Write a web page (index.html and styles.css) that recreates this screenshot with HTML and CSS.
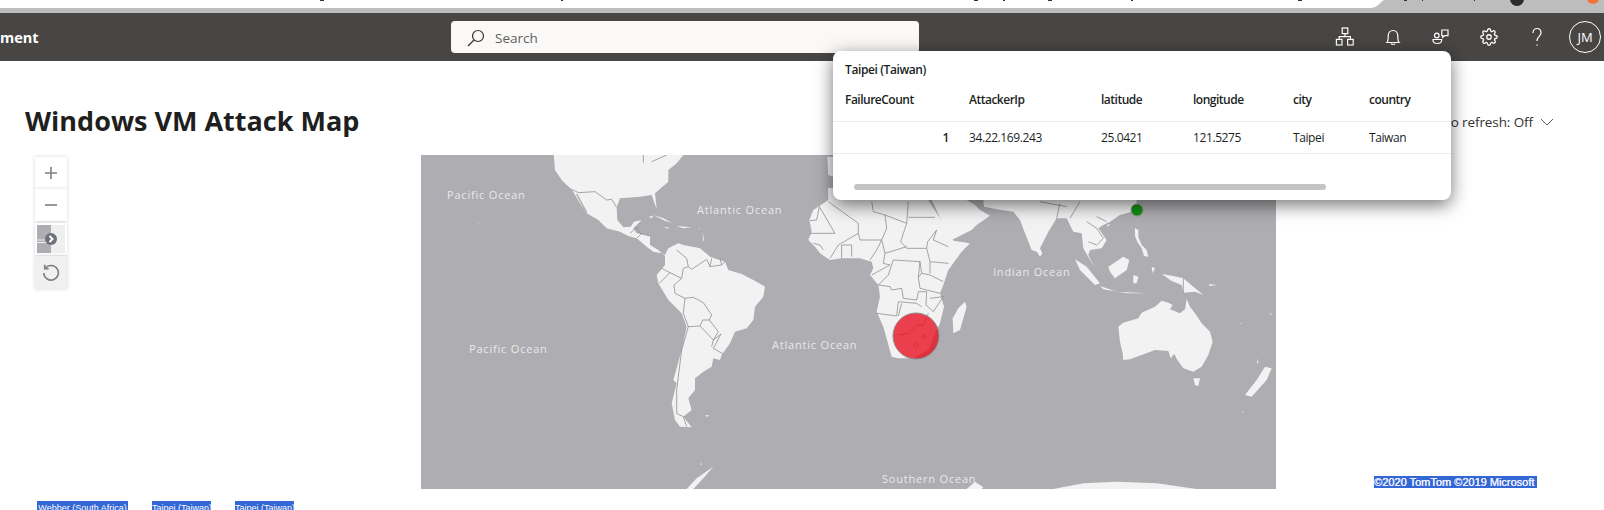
FILE: index.html
```html
<!DOCTYPE html>
<html lang="en">
<head>
    <meta charset="UTF-8">
    <meta name="viewport" content="width=device-width, initial-scale=1.0">
    <title>Windows VM Attack Map</title>
    <link rel="stylesheet" href="styles.css">
</head>
<body>
    <!-- bottom edge of the browser chrome -->
    <svg class="chrome-strip" width="1604" height="13" viewBox="0 0 1604 13">
        <rect width="1604" height="13" fill="#bdbdbd"/>
        <path d="M0 0H1384C1380 2 1378 8 1370 8H0Z" fill="#fff"/>
        <path d="M320 0h4v1h-4zM561 0h2v1h-2zM974 0h4v1h-4zM1003 0h2v1h-2zM1048 0h4v1h-4zM1131 0h2v1h-2zM1298 0h4v1h-4zM1404 0h3v1h-3zM1422 0h1v1h-1zM1474 0h1v1h-1z" fill="#333"/>
        <circle cx="1517" cy="-1" r="7" fill="#2d2a28"/>
        <circle cx="1593" cy="-2" r="6" fill="#f4733a"/>
    </svg>

    <header class="topbar">
        <div class="brand">ment</div>
        <div class="search">
            <svg class="search-icon" width="20" height="20" viewBox="0 0 20 20">
                <circle cx="12" cy="8" r="5.5"/>
                <path d="M8 12L2 18"/>
            </svg>
            <span>Search</span>
        </div>
        <div class="top-icons">
            <div class="top-icon">
                <svg width="24" height="24" viewBox="0 0 24 24">
                    <rect x="9.2" y="3" width="5.6" height="5.6"/>
                    <rect x="3.4" y="14.4" width="5.6" height="5.6"/>
                    <rect x="14.6" y="14.4" width="5.6" height="5.6"/>
                    <path d="M12 8.6v3M6.2 14.4v-2.8h11.2v2.8"/>
                </svg>
            </div>
            <div class="top-icon">
                <svg width="24" height="24" viewBox="0 0 24 24">
                    <path d="M6 17.5c1.2-1 1.2-3 1.2-6.5 0-3.400 2.200-5.500 4.800-5.500s4.800 2.100 4.800 5.500c0 3.500 0 5.500 1.200 6.500z"/>
                    <path d="M10 18.500c.5 1.300 3.500 1.300 4 0"/>
                </svg>
            </div>
            <div class="top-icon">
                <svg width="24" height="24" viewBox="0 0 24 24">
                    <path d="M12.800 5h6.200v5.600h-3.300l-2 1.800v-1.800h-.9z"/>
                    <circle cx="7.800" cy="10.500" r="2.300"/>
                    <path d="M4 14.500h8.600v.8c0 1.900-1.900 3.200-4.300 3.200s-4.300-1.300-4.300-3.200z"/>
                </svg>
            </div>
            <div class="top-icon top-icon-gear">
                <svg width="18" height="18" viewBox="0 0 24 24">
                    <circle cx="12" cy="12" r="3"/>
                    <path d="M19.4 15a1.65 1.65 0 0 0 .33 1.82l.06.06a2 2 0 0 1 0 2.83 2 2 0 0 1-2.83 0l-.06-.06a1.65 1.65 0 0 0-1.82-.33 1.65 1.65 0 0 0-1 1.51V21a2 2 0 0 1-2 2 2 2 0 0 1-2-2v-.09A1.65 1.65 0 0 0 9 19.4a1.65 1.65 0 0 0-1.82.33l-.06.06a2 2 0 0 1-2.83 0 2 2 0 0 1 0-2.83l.06-.06a1.65 1.65 0 0 0 .33-1.82 1.65 1.65 0 0 0-1.51-1H3a2 2 0 0 1-2-2 2 2 0 0 1 2-2h.09A1.65 1.65 0 0 0 4.600 9a1.65 1.65 0 0 0-.33-1.82l-.06-.06a2 2 0 0 1 0-2.83 2 2 0 0 1 2.83 0l.06.06a1.65 1.65 0 0 0 1.82.33H9a1.65 1.65 0 0 0 1-1.51V3a2 2 0 0 1 2-2 2 2 0 0 1 2 2v.09a1.65 1.65 0 0 0 1 1.51 1.65 1.65 0 0 0 1.82-.33l.06-.06a2 2 0 0 1 2.83 0 2 2 0 0 1 0 2.83l-.06.06a1.65 1.65 0 0 0-.33 1.82V9a1.65 1.65 0 0 0 1.51 1H21a2 2 0 0 1 2 2 2 2 0 0 1-2 2h-.09a1.65 1.65 0 0 0-1.51 1z"/>
                </svg>
            </div>
            <div class="top-icon">
                <svg width="24" height="24" viewBox="0 0 24 24">
                    <path d="M8 8c0-3 1.800-4.500 4-4.500s4 1.500 4 4.300c0 3.500-4 3.700-4 8.200"/>
                    <path d="M12 19.500v1.200"/>
                </svg>
            </div>
            <div class="avatar-cell">
                <div class="avatar">JM</div>
            </div>
        </div>
    </header>

    <main class="page">
        <div class="title-row">
            <h1>Windows VM Attack Map</h1>
            <div class="refresh">
                <span>Auto refresh: Off</span>
                <svg width="14" height="14" viewBox="0 0 14 14">
                    <path d="M1 4l6 6 6-6"/>
                </svg>
            </div>
        </div>

        <div class="stage">
            <div class="map-tools">
                <div class="tool">
                    <svg width="14" height="14" viewBox="0 0 14 14"><path d="M7 1v12M1 7h12"/></svg>
                </div>
                <div class="tool">
                    <svg width="14" height="14" viewBox="0 0 14 14"><path d="M1 7h12"/></svg>
                </div>
                <div class="tool tool-style">
                    <svg width="28" height="28" viewBox="0 0 28 28">
                        <rect width="14" height="28" fill="#aeadb1"/>
                        <rect x="14" width="14" height="28" fill="#efefef"/>
                        <path d="M0 15h14M0 17.500h12" stroke="#efefef" stroke-width="1"/>
                        <circle cx="14" cy="14" r="6" fill="#6d7278"/>
                        <path d="M12.500 11l3 3-3 3" stroke="#fff" stroke-width="2" fill="none"/>
                    </svg>
                </div>
                <div class="tool tool-reset">
                    <svg width="20" height="20" viewBox="0 0 20 20">
                        <path d="M4.400 5.200A7.300 7.300 0 1 1 2.800 10"/>
                        <path d="M3.700 1.800v4h4"/>
                    </svg>
                </div>
            </div>

            <div class="map">
                <svg width="855" height="334" viewBox="421 155 855 334">
                    <rect x="421" y="155" width="855" height="334" fill="#aeadb1"/>

                    <!-- americas -->
                    <g transform="translate(420 150) scale(.33333)">
                        <path class="land" d="M400,0L405,60L425,90L440,105L455,118L480,160L500,190L535,210L560,235L600,245L625,258L650,265L680,290L700,305L725,310L735,315L745,295L775,280L790,285L840,295L870,320L915,335L925,360L965,372L1000,390L1035,410L1030,440L1005,470L1000,510L980,535L945,545L930,580L905,615L900,630L880,625L875,650L850,665L825,685L825,720L805,745L815,780L790,800L815,832L780,830L765,810L755,760L770,700L760,690L785,600L800,530L785,490L745,450L715,400L710,375L735,345L735,318L715,300L690,285L690,258L665,252L650,250L640,235L650,225L665,210L642,215L632,230L610,232L592,210L590,172L600,145L660,140L695,135L710,178L705,130L745,95L745,60L770,40L790,15L790,0Z"/>
                        <path class="sliver" d="M470,132L500,188"/>
                        <path class="land" d="M700,195L730,205L755,218L735,212ZM685,200L700,198L695,205ZM770,228L815,232L790,235ZM730,232L745,232L745,236ZM835,235L840,235L838,238ZM848,245L852,270L849,275ZM170,212L180,222L174,218ZM800,1017L830,985L880,950L850,985L820,1017ZM840,942L846,940L844,945ZM855,795L870,797L860,800ZM1222,20L1240,20L1240,80L1225,75Z"/>
                        <path class="border" d="M455,118L475,128L525,125L560,150L575,148L590,172M670,15V38M695,35L740,15M630,250L650,232L660,250L690,258M650,265L665,250M770,300L800,325L805,350L790,355L785,385L762,405L765,430L795,445L790,490L805,530L840,528L848,510L868,510L895,545L880,570L903,552L880,595L910,612M805,350L815,358L860,328L870,350L905,345L900,325M875,325L870,350M905,345L915,335M725,355L750,368L718,400M750,368L785,385M795,445L820,442L850,458L875,495L868,510M840,528L880,570L875,590M805,530L785,600L770,720L770,790L790,800L800,830"/>
                    </g>

                    <!-- asia and the islands round it -->
                    <g transform="translate(840 150) scale(.33333)">
                        <path class="land" d="M275,150L320,245L335,270L395,240L410,225L450,197L420,180L405,165L380,150Z"/>
                        <path class="land" d="M430,150L432,170L470,178L520,185L540,210L555,250L575,300L590,305L600,320L607,310L600,295L625,245L650,205L680,205L700,245L725,250L730,295L765,355L745,315L750,300L785,295L800,270L775,235L790,225L810,215L840,195L875,185L890,160L890,150Z"/>
                        <path class="land" d="M705,328L740,350L780,400L765,405L720,360ZM780,408L830,425L920,430L860,430L790,418ZM805,350L850,320L868,330L860,360L825,385L810,365ZM880,375L895,380L890,400L880,400ZM885,235L895,240L895,262L905,285L920,300L925,320L912,318L905,295L892,275L885,258ZM965,372L1000,378L1030,385L1060,410L1090,435L1065,425L1030,428L1025,405L995,393ZM800,225L810,222L805,230ZM935,350L945,355L938,370ZM1105,402L1130,405L1110,408ZM1290,490L1297,492L1290,494ZM1200,518L1206,522L1202,522Z"/>
                        <path class="land" d="M835,530L850,518L895,505L905,488L945,470L965,452L985,458L998,465L990,478L1020,490L1035,478L1040,447L1050,470L1065,490L1085,520L1110,545L1118,575L1105,615L1085,650L1060,665L1030,655L1012,630L1003,612L992,625L985,603L945,600L905,615L870,628L850,630L848,610L840,575Z"/>
                        <path class="land" d="M1060,685L1080,685L1075,708L1065,705ZM1275,650L1295,655L1280,690L1235,740L1215,735L1250,690ZM1250,625L1256,640L1252,640ZM1205,785L1212,785L1208,788Z"/>
                        <path class="land" d="M640,1017L730,1000L830,995L950,1000L1070,1017ZM380,1017L405,995L430,1012L425,1017Z"/>
                        <path class="border" d="M1030,385V430M650,205L660,160M690,205L720,155M740,215L770,235L790,265L770,285L745,275M600,155L680,170M770,200L800,215"/>
                    </g>

                    <!-- africa -->
                    <g transform="translate(780 190) scale(.33333)">
                        <path class="land" d="M144,-6L145,30L100,60L88,90L95,125L85,150L105,170L120,190L150,210L185,205L240,205L275,215L280,235L270,255L295,285L300,320L290,365L310,410L335,500L355,505L400,505L445,480L470,420L480,400L492,350L480,310L490,285L505,240L545,185L570,160L520,152L505,120L470,70L445,30L440,-10Z"/>
                        <path class="land" d="M555,335L560,350L540,420L520,430L518,385L535,355Z"/>
                        <path class="border" d="M145,35L235,100L235,130L175,165L150,205M275,35L280,65L315,75L380,100L385,35M315,75L320,115L305,150L290,180L270,210M235,130L240,150L305,150M380,100L362,155L380,175L440,175L443,155L470,120L460,150L505,170M385,82H465M118,50L110,90L90,92M118,50L165,130L115,130L90,130M305,150L315,190L380,170M315,190L310,220L330,225L275,255M340,210L420,215L415,262L425,250L450,255L490,275M340,210L325,255L295,285L330,290L335,300L365,295L370,325L410,330L415,305L440,305M420,215L425,250M450,215L450,250M505,220L450,215L440,175M415,262L420,295L480,310M440,305L438,345L460,365L490,320L450,325M290,370L350,378L355,335L410,340L425,350M355,378L365,340M185,205L185,165H215L215,200M130,180L120,165L100,160M410,405L430,405L445,370M355,435L385,430L410,405M430,435L438,440L432,446L426,442ZM400,468L410,458L416,465L406,474Z"/>
                    </g>

                    <text class="ocean" x="447" y="199">Pacific Ocean</text>
                    <text class="ocean" x="469" y="353">Pacific Ocean</text>
                    <text class="ocean" x="697" y="214">Atlantic Ocean</text>
                    <text class="ocean" x="772" y="349">Atlantic Ocean</text>
                    <text class="ocean" x="993" y="276">Indian Ocean</text>
                    <text class="ocean" x="882" y="483">Southern Ocean</text>

                    <circle class="bubble-red" cx="916" cy="336" r="23"/>
                    <circle class="bubble-green" cx="1137" cy="210" r="6"/>
                </svg>
            </div>

            <div class="copyright"><span>©2020 TomTom ©2019 Microsoft</span></div>
        </div>

        <div class="legend">
            <span class="legend-item legend-first">Webber (South Africa)</span>
            <span class="legend-item">Taipei (Taiwan)</span>
            <span class="legend-item">Taipei (Taiwan)</span>
        </div>
    </main>

    <section class="popup">
        <div class="popup-title">Taipei (Taiwan)</div>
        <table class="popup-table">
            <thead>
                <tr>
                    <th class="col-count">FailureCount</th>
                    <th class="col-ip">AttackerIp</th>
                    <th class="col-lat">latitude</th>
                    <th class="col-lon">longitude</th>
                    <th class="col-city">city</th>
                    <th class="col-country">country</th>
                </tr>
            </thead>
            <tbody>
                <tr>
                    <td class="cell-count">1</td>
                    <td>34.22.169.243</td>
                    <td>25.0421</td>
                    <td>121.5275</td>
                    <td>Taipei</td>
                    <td>Taiwan</td>
                </tr>
            </tbody>
        </table>
        <div class="popup-scroll"></div>
    </section>
</body>
</html>
```

FILE: styles.css
```css
html, body {
    height: 510px;
    margin: 0;
    overflow: hidden;
}
body {
    background-color: #fff;
    color: #201f1e;
    font-family: "Open Sans", "Noto Sans", sans-serif;
    position: relative;
}
svg {
    display: block;
}
.chrome-strip {
    background-color: #bdbdbd;
}
.topbar {
    background-color: #484644;
    color: #fff;
    display: flex;
    align-items: center;
    height: 48px;
}
.brand {
    width: 37px;
    font-size: 14.500px;
    font-weight: 700;
    text-align: right;
    white-space: nowrap;
}
.search {
    background-color: #faf9f8;
    color: #605e5c;
    border-radius: 4px;
    display: flex;
    align-items: center;
    gap: 9px;
    width: 468px;
    height: 32px;
    margin-left: 414px;
    padding: 1px 0 0 15px;
    box-sizing: border-box;
    font-size: 13.500px;
}
.search-icon {
    fill: none;
    stroke: #323130;
    stroke-width: 1.200;
}
.top-icons {
    display: flex;
    align-items: center;
    margin-left: auto;
}
.top-icon {
    width: 48px;
    height: 48px;
    display: flex;
    align-items: center;
    justify-content: center;
}
.top-icon svg {
    fill: none;
    stroke: #fff;
    stroke-width: 1.200;
}
.top-icon-gear svg {
    stroke-width: 1.700;
}
.avatar-cell {
    width: 43px;
    display: flex;
    justify-content: flex-end;
    padding-right: 3px;
    box-sizing: border-box;
}
.avatar {
    width: 32px;
    height: 32px;
    border: 1px solid #fff;
    border-radius: 50%;
    box-sizing: border-box;
    display: flex;
    align-items: center;
    justify-content: center;
    font-size: 13px;
}
.title-row {
    display: flex;
    justify-content: space-between;
    align-items: center;
    height: 40px;
    padding: 39px 50px 2px 25px;
}
h1 {
    font-size: 27px;
    font-weight: 700;
    margin: 0;
}
.refresh {
    display: flex;
    align-items: center;
    gap: 7px;
    padding-top: 4px;
    font-size: 13.500px;
    letter-spacing: -0.1px;
    color: #323130;
}
.refresh svg {
    fill: none;
    stroke: #605e5c;
    stroke-width: 1;
}
.stage {
    display: flex;
    height: 334px;
    margin-top: 13px;
    padding-left: 35px;
}
.map-tools {
    width: 32px;
    padding-top: 2px;
    display: flex;
    flex-direction: column;
}
.tool {
    width: 32px;
    height: 32px;
    background-color: #fff;
    box-shadow: 0 0 4px rgba(0, 0, 0, 0.16);
    display: flex;
    align-items: center;
    justify-content: center;
}
.tool svg {
    fill: none;
    stroke: #7b8085;
    stroke-width: 1.600;
}
.tool-style {
    margin-top: 2px;
}
.tool-style svg {
    stroke: none;
}
.tool-reset {
    background-color: #f0f0f0;
    height: 33px;
    margin-top: 1px;
}
.map {
    width: 855px;
    height: 334px;
    margin-left: 354px;
    overflow: hidden;
}
.land {
    fill: #f2f2f2;
}
.border {
    fill: none;
    stroke: #8f8f8f;
    stroke-width: 0.800;
    vector-effect: non-scaling-stroke;
}
.sliver {
    fill: none;
    stroke: #aeadb1;
    stroke-width: 1.500;
    vector-effect: non-scaling-stroke;
}
.ocean {
    fill: #e9e9e9;
    font-size: 11px;
    letter-spacing: 0.8px;
}
.bubble-red {
    fill: #e81123;
    fill-opacity: 0.8;
    stroke: #8a8a8a;
    stroke-width: 1;
}
.bubble-green {
    fill: #128f14;
    stroke: #8a9a8a;
    stroke-width: 1;
}
.copyright {
    align-self: flex-end;
    margin-left: 98px;
    margin-bottom: 1px;
    font-family: "Liberation Sans", Arial, sans-serif;
    font-size: 11px;
    line-height: 12px;
    text-shadow: 0.3px 0 0 #fff;
    white-space: nowrap;
}
.copyright span {
    background-color: #3367d6;
    color: #eef;
    display: block;
    padding-right: 3px;
}
.legend {
    display: flex;
    margin-top: 12px;
    padding-left: 37px;
    font-family: "Liberation Sans", Arial, sans-serif;
    font-size: 9px;
    line-height: 14px;
}
.legend-item {
    background-color: #3367d6;
    color: #fff;
    width: 59px;
    height: 14px;
    margin-right: 24px;
    text-align: center;
    white-space: nowrap;
}
.legend-first {
    width: 91px;
}
.popup {
    position: absolute;
    left: 833px;
    top: 51px;
    width: 618px;
    height: 149px;
    background-color: #fff;
    border-radius: 8px;
    box-shadow: 0 5px 18px rgba(0, 0, 0, 0.55);
    font-size: 12px;
    letter-spacing: -0.4px;
}
.popup-title {
    padding: 9px 12px 0;
    height: 19px;
    line-height: 19px;
    font-weight: 600;
}
.popup-table {
    border-collapse: collapse;
    table-layout: fixed;
    width: 618px;
}
.popup-table th {
    font-weight: 600;
    letter-spacing: -0.5px;
    text-align: left;
    box-sizing: border-box;
    height: 42px;
    padding: 0 0 0 12px;
    border-bottom: 1px solid #edebe9;
}
.popup-table td {
    box-sizing: border-box;
    height: 32px;
    padding: 0 0 0 12px;
    border-bottom: 1px solid #edebe9;
}
.popup-table .col-count { width: 124px; }
.popup-table .col-ip { width: 132px; }
.popup-table .col-lat { width: 92px; }
.popup-table .col-lon { width: 100px; }
.popup-table .col-city { width: 76px; }
.popup-table .col-country { width: 94px; }
.popup-table .cell-count {
    text-align: right;
    font-weight: 600;
    padding-right: 8px;
}
.popup-scroll {
    width: 472px;
    height: 6px;
    margin: 30px 0 0 21px;
    background-color: #c4c4c4;
    border-radius: 3px;
}
```
